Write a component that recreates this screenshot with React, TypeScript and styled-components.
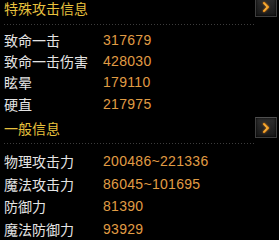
import styled, { createGlobalStyle } from 'styled-components';

const GlobalStyle = createGlobalStyle`
  html, body {
    margin: 0;
    padding: 0;
    background: #000;
  }
  body {
    font-family: "Liberation Sans", "Noto Sans CJK SC", sans-serif;
    overflow: hidden;
  }
`;

type Stat = { label: string; value: string };

const special: Stat[] = [
  { label: '致命一击', value: '317679' },
  { label: '致命一击伤害', value: '428030' },
  { label: '眩晕', value: '179110' },
  { label: '硬直', value: '217975' },
];

const general: Stat[] = [
  { label: '物理攻击力', value: '200486~221336' },
  { label: '魔法攻击力', value: '86045~101695' },
  { label: '防御力', value: '81390' },
  { label: '魔法防御力', value: '93929' },
];

export default function App() {
  return (
    <>
      <GlobalStyle />
      <Panel>
        <Section $top={0}>
          <Header>
            <Title>特殊攻击信息</Title>
            <ExpandButton $offset={-4}>
              <Chevron />
            </ExpandButton>
          </Header>
          <Divider $gap={6} />
          <Rows $padTop={4}>
            {special.map((s) => (
              <Row key={s.label} $height={21.3}>
                <Label>{s.label}</Label>
                <Value>{s.value}</Value>
              </Row>
            ))}
          </Rows>
        </Section>
        <Section $top={6}>
          <Header>
            <Title>一般信息</Title>
            <ExpandButton $offset={-3}>
              <Chevron />
            </ExpandButton>
          </Header>
          <Divider $gap={5} />
          <Rows $padTop={6}>
            {general.map((s) => (
              <Row key={s.label} $height={22.5}>
                <Label>{s.label}</Label>
                <Value>{s.value}</Value>
              </Row>
            ))}
          </Rows>
        </Section>
      </Panel>
    </>
  );
}

function Chevron() {
  return (
    <svg width="10" height="12" viewBox="0 0 10 12">
      <path d="M3 2 L7 6 L3 10" fill="none" stroke="#e8901c" strokeWidth="2.4" strokeLinecap="round" strokeLinejoin="round" />
      <path d="M3.3 2.6 L6.4 6 L3.3 9.4" fill="none" stroke="#ffd060" strokeWidth="0.8" strokeLinecap="round" strokeLinejoin="round" />
    </svg>
  );
}

const Panel = styled.div`
  width: 279px;
  height: 240px;
  background: #000;
  display: flex;
  flex-direction: column;
`;

const Section = styled.div<{ $top: number }>`
  display: flex;
  flex-direction: column;
  margin-top: ${(p) => p.$top}px;
`;

const Header = styled.div`
  position: relative;
  height: 18px;
  display: flex;
  align-items: center;
  padding-left: 4px;
`;

const Title = styled.div`
  font-size: 14px;
  line-height: 18px;
  color: #e8c23e;
`;

const ExpandButton = styled.div<{ $offset: number }>`
  position: absolute;
  right: 2px;
  top: ${(p) => p.$offset}px;
  width: 20px;
  height: 19px;
  display: flex;
  align-items: center;
  justify-content: center;
  background: linear-gradient(#303030, #1a1a1a);
  border: 1px solid #3e3e3e;
  border-top-color: #505050;
  box-shadow: inset 0 0 3px #000;
  svg {
    filter: drop-shadow(0 0 1px rgba(255, 150, 30, 0.5));
  }
`;

const Divider = styled.div<{ $gap: number }>`
  margin: ${(p) => p.$gap}px 0 0 4px;
  width: 250px;
  height: 1px;
  background-image: linear-gradient(to right, #3c3c3c 1px, transparent 1px);
  background-size: 3px 1px;
`;

const Rows = styled.div<{ $padTop: number }>`
  display: flex;
  flex-direction: column;
  padding-top: ${(p) => p.$padTop}px;
`;

const Row = styled.div<{ $height: number }>`
  display: grid;
  grid-template-columns: 99px 1fr;
  align-items: center;
  height: ${(p) => p.$height}px;
  padding-left: 4px;
  font-size: 14px;
`;

const Label = styled.div`
  color: #e4e4e4;
`;

const Value = styled.div`
  color: #e09c44;
  letter-spacing: 0.3px;
`;
